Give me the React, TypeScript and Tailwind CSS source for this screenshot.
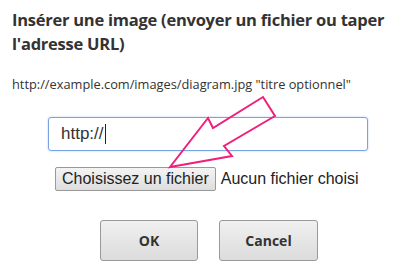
export default function App() {
  return (
    <div className="relative w-[409px] h-[280px] bg-white overflow-hidden">
      <div className="pl-3 pr-1 pt-[8px]" style={{ fontFamily: '"Open Sans", sans-serif' }}>
        <h1 className="text-[16.5px] leading-[24px] font-bold tracking-[-0.25px] text-[#333]">
          Insérer une image (envoyer un fichier ou taper l'adresse URL)
        </h1>
        <p className="mt-[19px] text-[12.8px] leading-[18px] text-[#333]">
          http://example.com/images/diagram.jpg "titre optionnel"
        </p>
      </div>

      <div className="flex flex-col items-start pl-[48px] mt-[24px]" style={{ fontFamily: '"Liberation Sans", Arial, sans-serif' }}>
        <div className="w-[320px] h-[34px] flex items-center pl-[12px] border border-[#7aa3e5] rounded-[3px] shadow-[0_0_2px_#a9c4f0] text-[17px] text-[#333]">
          http://<span className="inline-block w-px h-[20px] bg-[#222] ml-[1px]" />
        </div>
        <div className="flex items-center mt-[16px] ml-[7px]">
          <button className="h-[24px] px-[6px] border border-[#999] rounded-[2px] bg-gradient-to-b from-[#f4f4f4] to-[#dedede] text-[16px] text-[#222] leading-none">
            Choisissez un fichier
          </button>
          <span className="ml-[5px] text-[16px] text-[#222]">Aucun fichier choisi</span>
        </div>
      </div>

      <div className="flex gap-[21px] pl-[100px] mt-[29px]" style={{ fontFamily: '"Open Sans", sans-serif' }}>
        <button className="w-[98px] h-[41px] border border-[#999] rounded-[3px] bg-gradient-to-b from-[#f0f0f0] to-[#dcdcdc] text-[14px] font-bold text-[#333]">
          OK
        </button>
        <button className="w-[99px] h-[41px] border border-[#999] rounded-[3px] bg-gradient-to-b from-[#f0f0f0] to-[#dcdcdc] text-[14px] font-bold text-[#333]">
          Cancel
        </button>
      </div>

      {/* annotation arrow */}
      <svg className="absolute inset-0 pointer-events-none" width="409" height="280" viewBox="0 0 409 280">
        <polygon
          points="170,167 208,118 213,128 263,97 275,116 224,146 232,156"
          fill="none"
          stroke="#f0207a"
          strokeWidth="2"
          strokeLinejoin="miter"
        />
      </svg>
    </div>
  );
}
